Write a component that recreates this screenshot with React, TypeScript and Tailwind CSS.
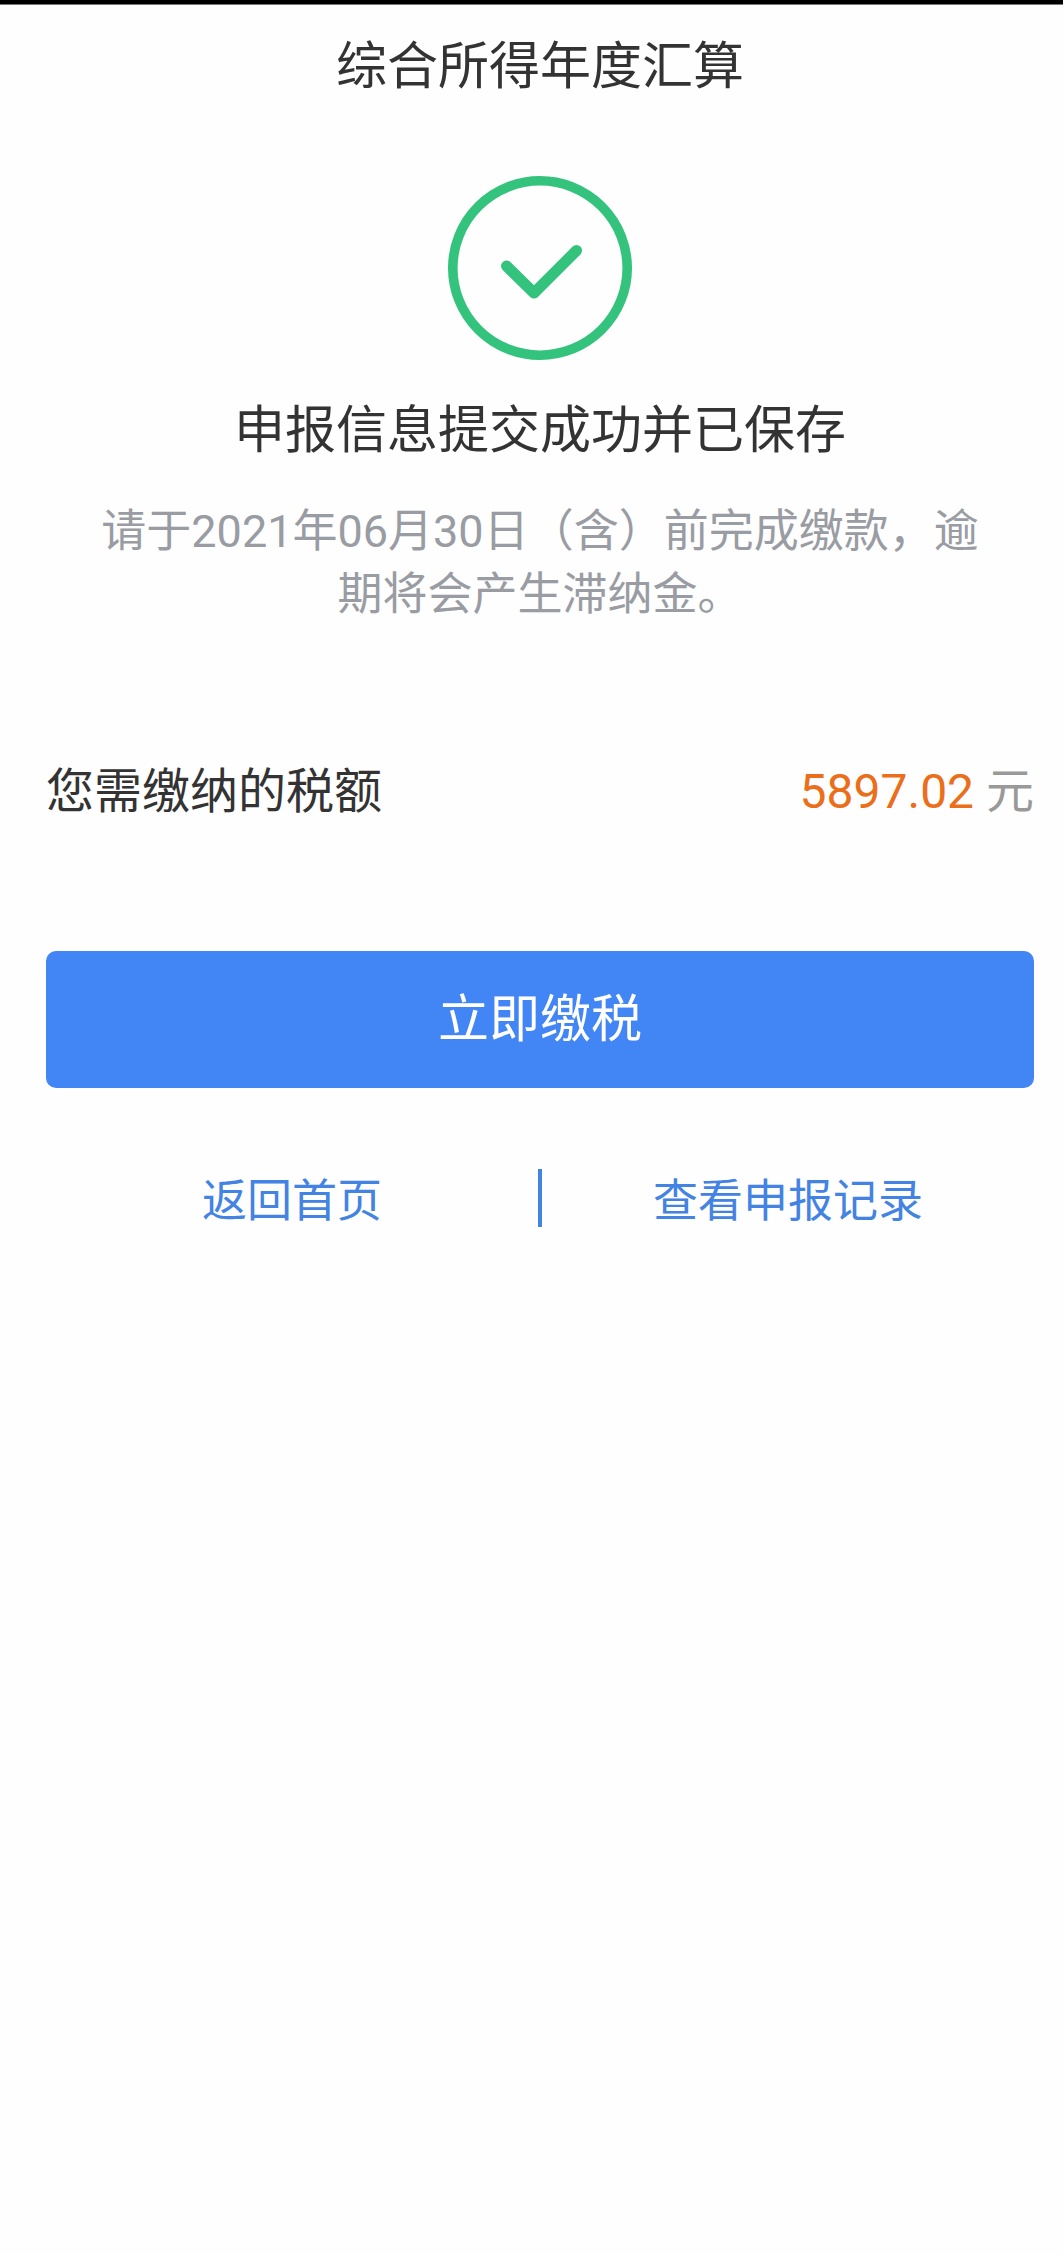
const links = ["返回首页", "查看申报记录"];

function SuccessIcon() {
  return (
    <svg width="184" height="184" viewBox="0 0 184 184" fill="none" stroke="#34c37c">
      <circle cx="92" cy="92" r="87.2" strokeWidth="9.6" />
      <path d="M58.5 90 L86 117 L128.5 74.5" strokeWidth="11" strokeLinecap="round" strokeLinejoin="round" />
    </svg>
  );
}

export default function App() {
  return (
    <div className="min-h-[2254px] bg-[#fefefe] font-[Roboto,'Noto_Sans_CJK_SC',sans-serif] text-[#333]">
      <div className="h-[5px] border-b border-[#777] bg-black" />

      <div className="flex flex-col pl-[46px] pr-[29px]">
        <h1 className="h-[120px] text-center text-[51px] leading-[123px]">综合所得年度汇算</h1>

        {/* Result */}
        <div className="mt-[51px] flex flex-col items-center">
          <SuccessIcon />
          <h2 className="mt-[41px] text-[51px] leading-[60px]">申报信息提交成功并已保存</h2>
          <p className="mt-[39px] w-[900px] text-center text-[45px] leading-[63px] text-[#999ca3]">
            请于2021年06月30日（含）前完成缴款，逾
            <br />
            期将会产生滞纳金。
          </p>
        </div>

        {/* Amount due */}
        <div className="mt-[136px] flex h-[60px] items-center justify-between text-[48px] leading-[60px]">
          <span>您需缴纳的税额</span>
          <span className="text-[#999]">
            <span className="text-[#eb6f1a]">5897.02</span> 元
          </span>
        </div>

        <button className="mt-[129px] h-[137px] rounded-[10px] bg-[#4285f5] pt-0.5 text-[51px] text-white">
          立即缴税
        </button>

        <div className="mt-[81px] flex h-[58px] items-center text-[45px] text-[#4383e4]">
          <a className="flex-1 pt-[7px] text-center leading-[58px]">{links[0]}</a>
          <div className="h-full w-1 bg-[#4383e4]" />
          <a className="flex-1 pt-[7px] text-center leading-[58px]">{links[1]}</a>
        </div>
      </div>
    </div>
  );
}
